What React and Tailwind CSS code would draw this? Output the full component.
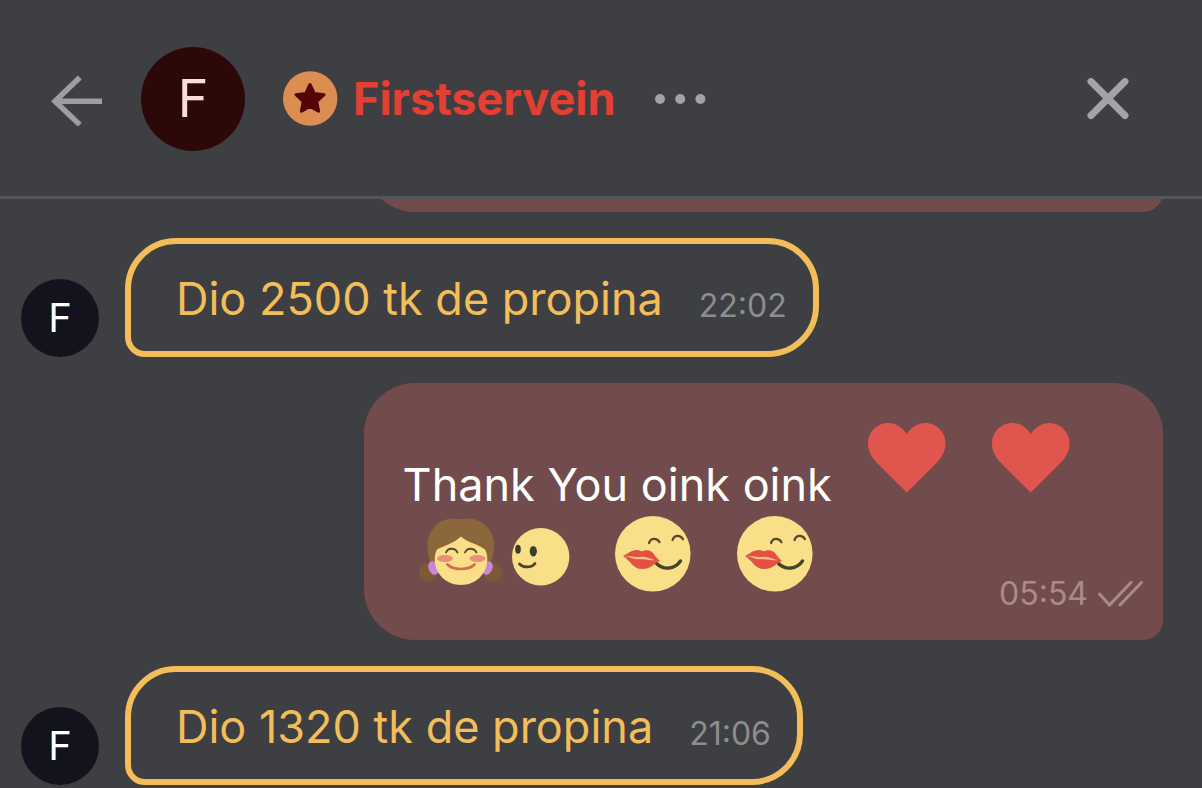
import React from "react";

function BackIcon() {
  return (
    <svg className="block h-[54px] w-[51px]" viewBox="0 0 51 54" fill="none" stroke="#9d9ea1" strokeWidth="5.5" aria-hidden="true">
      <path d="M28.800 5.500 4 29.200l24.800 23.500M4 29.200h47" />
    </svg>
  );
}

function CloseIcon() {
  return (
    <svg className="block h-[42px] w-[42px]" viewBox="0 0 42 42" fill="none" stroke="#a2a3a8" strokeWidth="7" strokeLinecap="round" aria-hidden="true">
      <path d="M4 3.500l34 34M38 3.500 4 37.500" />
    </svg>
  );
}

function MoreIcon() {
  return (
    <svg className="block h-[10px] w-[51px]" viewBox="0 0 51 10" fill="#a2a3a8" aria-hidden="true">
      <circle cx="5" cy="5" r="5" />
      <circle cx="25.200" cy="5" r="5" />
      <circle cx="45.400" cy="5" r="5" />
    </svg>
  );
}

function StarBadge() {
  return (
    <svg className="h-14 w-[55px] shrink-0" viewBox="0 0 55 56" aria-hidden="true">
      <circle cx="27.200" cy="27.500" r="27.200" fill="#dc8d51" />
      <path
        d="M27 13.500l4.200 8.900 9.800 1.300-7.200 6.800 1.800 9.700-8.600-4.700-8.600 4.700 1.800-9.700-7.200-6.800 9.800-1.300z"
        fill="#540507" stroke="#540507" strokeWidth="3" strokeLinejoin="round"
      />
    </svg>
  );
}

function Heart() {
  return (
    <svg className="h-[70px] w-[78px] shrink-0" viewBox="0 0 78 70" role="img" aria-label="heart">
      <path d="M38.700 11C34 4 27.500 0 20.500 0 9 0 0 9 0 20.500c0 9 4.500 15 11 21.500L38.700 69.500 66.500 42c6.500-6.500 11-12.500 11-21.500C77.500 9 68.500 0 57 0 50 0 43.500 4 38.700 11z" fill="#e0554e" />
    </svg>
  );
}

function Friends() {
  return (
    <svg className="h-[76px] w-[152px] shrink-0" viewBox="0 0 152 76" fill="none" strokeLinecap="round" role="img" aria-label="girl smiling with a friend">
      <circle cx="9" cy="56.500" r="9" fill="#805835" />
      <circle cx="74" cy="56.500" r="9" fill="#805835" />
      <path d="M42 3.500C51 1 61 4 67 10c6 6 8 12 8 19 0 8-2 16-6 22H14C10 44 8.500 37 8.500 29c0-7 2-13 8-19C22 4 32 1 42 3.500z" fill="#8c673b" />
      <ellipse cx="14.500" cy="52" rx="5" ry="7" transform="rotate(-22 14.500 52)" fill="#c985dc" />
      <ellipse cx="68.500" cy="52" rx="5" ry="7" transform="rotate(22 68.500 52)" fill="#c985dc" />
      <path d="M42 20.500c6 6 16 7 24 13 1.500 3 2.300 6 2.300 9.500C68.300 58 56.500 69 42 69S15.700 58 15.700 43c0-3.500.8-6.500 2.300-9.500 8-4 18-7 24-13z" fill="#f8df88" />
      <ellipse cx="26" cy="42.500" rx="8" ry="3.500" fill="#ea8e77" />
      <ellipse cx="58.500" cy="42.500" rx="8" ry="3.500" fill="#ea8e77" />
      <path d="M27 36.500c2-5 9-5 11.500 0M46 36.500c2-5 9-5 11.500 0" stroke="#594b2b" strokeWidth="1.800" />
      <path d="M28.500 48.500c6 6 21 6 27 0" stroke="#dc664f" strokeWidth="2.600" />
      <circle cx="121.700" cy="40.700" r="28.700" fill="#f8df88" />
      <ellipse cx="99" cy="33.300" rx="2.800" ry="4.500" fill="#3c3d29" />
      <ellipse cx="114.300" cy="35.300" rx="3.600" ry="5.300" fill="#3c3d29" />
      <path d="M100.500 48c4 4 12 4 15.500-.5" stroke="#474327" strokeWidth="2.800" />
    </svg>
  );
}

function Kiss() {
  return (
    <svg className="h-[76px] w-20 shrink-0" viewBox="0 0 80 76" fill="none" strokeLinecap="round" role="img" aria-label="kiss">
      <circle cx="39.800" cy="37.800" r="37.800" fill="#f8df88" />
      <path d="M36 27c2-5.500 8-5 10.500-.8M59.500 24c2-5.500 8-5 10.500-.8" stroke="#53482c" strokeWidth="2.200" />
      <path d="M43.500 47.500c7 7 18 6 24-2.500" stroke="#43442a" strokeWidth="3.400" />
      <path d="M10 40C14.500 38 18 34 24 34c2 0 3.500 1 5 1.300 2-.8 4-1.600 7-.8 5 1.500 6 7 11 10.500-5 1-8 8-18 8-9 0-11-8-19-13z" fill="#e25141" />
      <path d="M12 40c6-.5 10 1.500 15 .9 6-.8 9 1.800 16 3.300-7 .6-10-1.400-16-.9-6 .4-9-1.800-15-3.300z" fill="#f6bd86" />
    </svg>
  );
}

function DoubleCheck() {
  return (
    <svg className="h-[26px] w-[45px] shrink-0" viewBox="0 0 45 26" fill="none" stroke="#a98b8b" strokeWidth="3" strokeLinecap="round" role="img" aria-label="read">
      <path d="M1.500 13 11.500 24 33 1.500M22 24 43.500 1.500" />
    </svg>
  );
}

function TipMessage({ text, time }) {
  return (
    <li className="flex items-end gap-[26px]">
      <span className="flex size-[78px] shrink-0 items-center justify-center rounded-full bg-[#13131e] text-[40px] text-white">F</span>
      <div className="flex items-end gap-[36px] rounded-[51px] rounded-bl-[20px] border-[6px] border-[#f3bd59] pt-[26px] pr-[26px] pb-6 pl-[45px]">
        <p className="text-[45px] leading-[57px] text-[#f3bd59]">{text}</p>
        <time className="text-[32px] leading-[42px] text-[#8d8d90]">{time}</time>
      </div>
    </li>
  );
}

export default function App() {
  return (
    <div className="flex h-screen flex-col overflow-hidden bg-[#3e3f42] font-['Inter',sans-serif]">
      <header className="flex shrink-0 items-center border-b-[3px] border-[#555659] pt-[47px] pr-[73px] pb-[45px] pl-[51px]">
        <button type="button" aria-label="Back"><BackIcon /></button>
        <span className="ml-[39px] flex size-[104px] shrink-0 items-center justify-center rounded-full bg-[#2d0808] text-[52px] text-[#ffdcdc]">F</span>
        <div className="ml-[38px] flex items-center gap-[15px]">
          <StarBadge />
          <h1 className="text-[45px] leading-[56px] font-bold text-[#e43f33]">Firstservein</h1>
        </div>
        <button type="button" aria-label="More options" className="ml-[39px]"><MoreIcon /></button>
        <button type="button" aria-label="Close" className="ml-auto"><CloseIcon /></button>
      </header>

      <main className="min-h-0 flex-1 overflow-hidden">
        <ul className="flex flex-col gap-[26px] pr-[39px] pl-[21px]">
          <li className="flex h-[13px] items-end overflow-hidden">
            <div className="ml-auto h-32 w-[70%] shrink-0 rounded-[51px] rounded-br-[20px] bg-[#724c4c]" />
          </li>
          <TipMessage text="Dio 2500 tk de propina" time="22:02" />
          <li className="ml-auto flex w-[70%] flex-col gap-[3px] rounded-[51px] rounded-br-[20px] bg-[#724c4c] pt-10 pr-5 pb-[26px] pl-[39px]">
            <div className="flex h-[90px] items-start">
              <p className="self-end text-[45px] leading-[56px] whitespace-nowrap text-white">Thank You oink oink</p>
              <span className="ml-[36px] flex gap-[46px]">
                <Heart />
                <Heart />
              </span>
            </div>
            <div className="flex h-[98px] items-start justify-between pl-4">
              <span className="flex gap-[42px]">
                <Friends />
                <Kiss />
                <Kiss />
              </span>
              <span className="flex items-center gap-[10px] self-end text-[#a98b8b]">
                <time className="text-[32px] leading-10">05:54</time>
                <DoubleCheck />
              </span>
            </div>
          </li>
          <TipMessage text="Dio 1320 tk de propina" time="21:06" />
        </ul>
      </main>
    </div>
  );
}
